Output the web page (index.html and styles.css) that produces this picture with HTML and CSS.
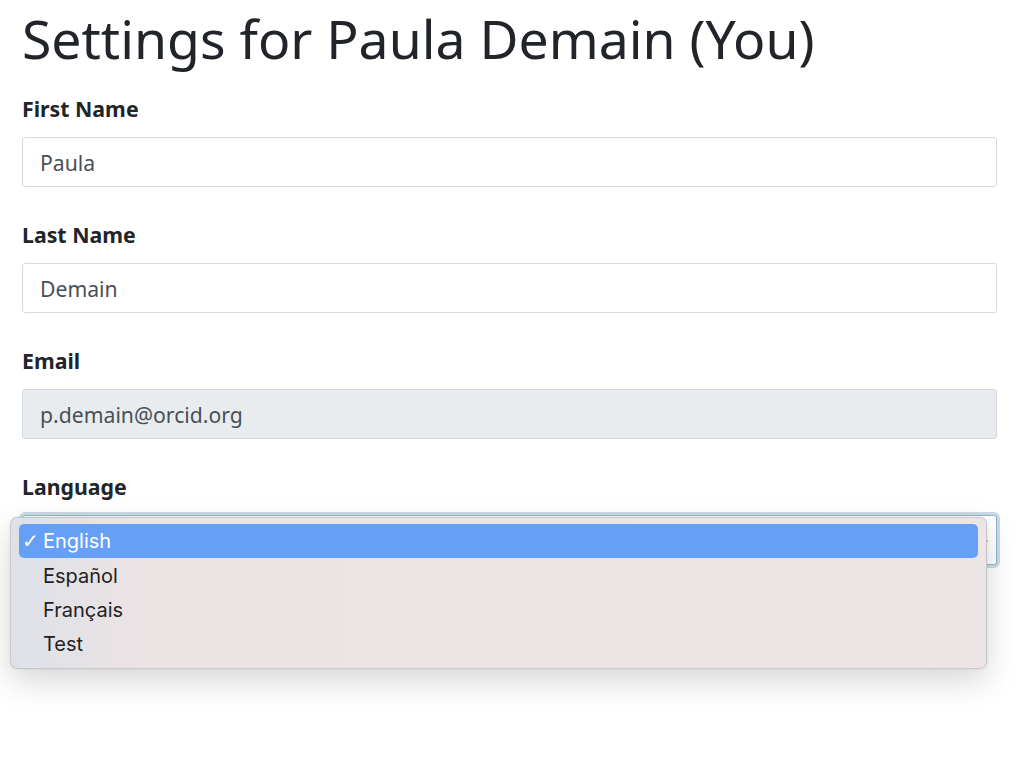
FILE: index.html
```html
<!DOCTYPE html>
<html lang="en">
<head>
<meta charset="utf-8">
<title>Settings</title>
<link rel="stylesheet" href="styles.css">
</head>
<body>
<main class="page">
  <h1 class="title">Settings for Paula Demain (You)</h1>
  <div class="group">
    <label class="label" for="first">First Name</label>
    <input class="field" id="first" type="text" value="Paula">
  </div>
  <div class="group">
    <label class="label" for="last">Last Name</label>
    <input class="field" id="last" type="text" value="Demain">
  </div>
  <div class="group">
    <label class="label" for="email">Email</label>
    <input class="field field-disabled" id="email" type="text" value="p.demain@orcid.org" disabled>
  </div>
  <div class="group">
    <label class="label" for="lang">Language</label>
    <div class="select-wrap">
      <div class="select focus">
        <span class="select-arrow"></span>
      </div>
      <ul class="menu">
        <li class="menu-item selected"><span class="check">✓</span>English</li>
        <li class="menu-item"><span class="check"></span>Español</li>
        <li class="menu-item"><span class="check"></span>Français</li>
        <li class="menu-item"><span class="check"></span>Test</li>
      </ul>
    </div>
  </div>
</main>
</body>
</html>
```
FILE: styles.css
```css
* { box-sizing: border-box; }
html, body { margin: 0; padding: 0; background: #fff; min-height: 759px; }
body {
  font-family: "Noto Sans", "Open Sans", sans-serif;
  color: #212529;
}
.page {
  padding: 7px 27px 0 22px;
  min-height: 759px;
}
.title {
  font-size: 53.5px;
  font-weight: 400;
  line-height: 1.2;
  margin: 0 0 23px 0;
  color: #212529;
}
.group {
  margin-bottom: 33px;
}
.label {
  display: block;
  font-size: 21.3px;
  font-weight: 700;
  line-height: 30px;
  margin-bottom: 13px;
}
.field {
  display: block;
  width: 100%;
  height: 50px;
  padding: 0 17px;
  font-family: "Noto Sans", "Open Sans", sans-serif;
  font-size: 21.2px;
  color: #495057;
  background: #fff;
  border: 1px solid #d6dadf;
  border-radius: 3px;
  outline: none;
}
.field-disabled {
  background: #e9ecef;
  color: #495057;
  -webkit-text-fill-color: #495057;
  opacity: 1;
}
.select-wrap {
  position: relative;
}
.select {
  height: 50px;
  border: 1px solid #8fb8cc;
  border-radius: 3px;
  background: #fff;
  box-shadow: 0 0 0 3px #c9dbe4;
  padding: 0 17px;
  display: flex;
  align-items: center;
  justify-content: flex-end;
}
.select-arrow {
  width: 0;
  height: 0;
  border-left: 3px solid transparent;
  border-right: 3px solid transparent;
  border-top: 6px solid #343a40;
  transform: rotate(30deg);
  margin-right: -8px;
  margin-top: 4px;
}
.menu {
  position: absolute;
  left: -12px;
  top: 2px;
  width: 977px;
  margin: 0;
  padding: 6px 8px 7px;
  list-style: none;
  border-radius: 7px;
  border: 1px solid rgba(0, 0, 0, 0.12);
  background: linear-gradient(90deg, #dde2e8 0, #e4e2e6 60px, #ece3e4 140px, #ede4e5 100%);
  box-shadow: 0 12px 32px rgba(0, 0, 0, 0.16), 0 0 3px rgba(0, 0, 0, 0.08);
  font-family: Inter, "Liberation Sans", sans-serif;
  font-size: 20px;
  color: #222;
  z-index: 2;
}
.menu-item {
  height: 34.25px;
  display: flex;
  align-items: center;
  padding-left: 3px;
  border-radius: 5px;
}
.menu-item.selected {
  background: #66a0f6;
  color: #fff;
}
.check {
  display: inline-block;
  width: 21px;
  font-family: "DejaVu Sans", sans-serif;
  font-size: 20px;
  font-weight: 700;
}
```
